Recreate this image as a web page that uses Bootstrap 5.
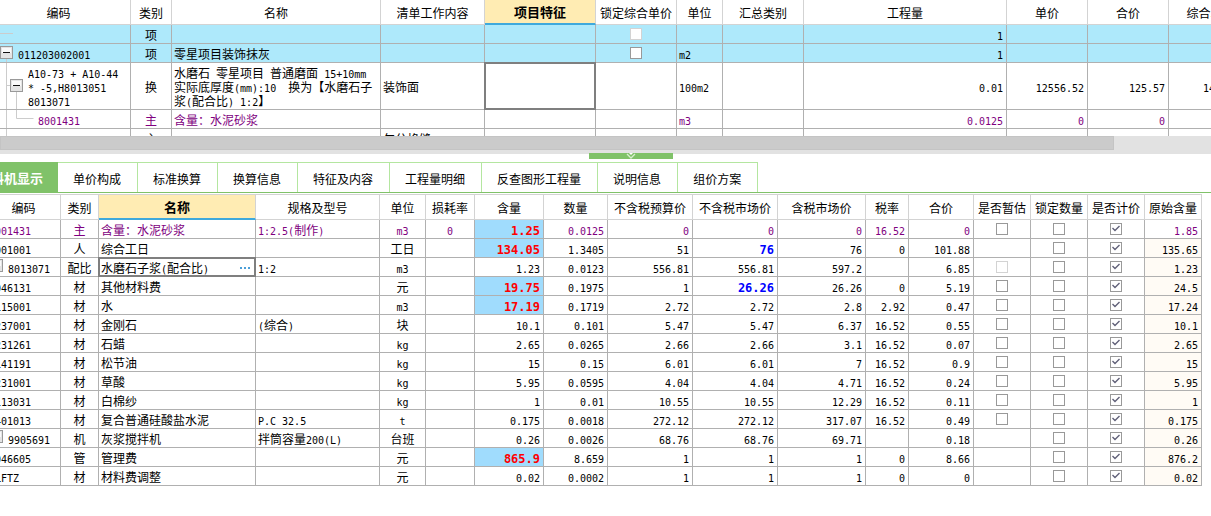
<!DOCTYPE html>
<html lang="zh-CN">
<head>
<meta charset="utf-8">
<meta name="viewport" content="width=device-width, initial-scale=1">
<title>工料机显示</title>
<link href="https://cdn.jsdelivr.net/npm/bootstrap@5.3.0/dist/css/bootstrap.min.css" rel="stylesheet">
<style>
  body { font: 12px/14px "Noto Sans CJK SC", sans-serif; color: #000; background: #fff; overflow: hidden; }
  .mono { font-family: "DejaVu Sans Mono", monospace; font-size: 10px; line-height: 10px; white-space: pre; }
  .grid-pane { overflow: hidden; }
  .grid-top { height: 136px; }
  /* both grids are scrolled slightly to the right */
  .sheet { table-layout: fixed; border-collapse: separate; border-spacing: 0; margin-left: -13px; }
  .sheet th { height: 25px; padding: 2px 0 0; font-weight: 400; text-align: center; vertical-align: middle; white-space: nowrap;
    border-right: 1px solid #d3d3d3; border-bottom: 1px solid #d3d3d3; overflow: hidden; }
  .sheet td { height: 19px; padding: 2px 2px 0; white-space: nowrap; vertical-align: middle;
    border-right: 1px solid #b0b0b0; border-bottom: 1px solid #b0b0b0; line-height: 14px; }
  .sheet th.current { background: #ffecb3; border-bottom: 2px solid #3fa9dc; font-weight: 700; font-size: 13px; padding: 0; }
  .sheet td.num { text-align: right; padding: 2px 3px 0; }
  .sheet td.mid { text-align: center; }
  .sheet td.tree, .sheet td.check { padding: 0; }
  .sheet td.tree .node-text { padding-top: 2px; }
  .sheet td.code { padding-left: 8px; }
  .sheet tr.tall td { height: 47px; }
  .sheet tr.section td { background: #aee9fb; }
  .sheet tr.main-item td { color: #800080; }
  .sheet td.cut { padding-left: 34px; }
  .sheet td.edited, .sheet tr.main-item td.edited { background: #a0dcfd; color: #f00; font-weight: 700; }
  .sheet td.price { color: #00f; font-weight: 700; }
  .sheet td.edited .mono, .sheet td.price .mono { font-size: 12px; }
  .sheet td.origin { background: #fffbf5; }
  .sheet td.picked { position: relative; }
  .sheet td.picked::after { content: ""; position: absolute; inset: -1px; border: 2px solid #7f7f7f; pointer-events: none; }
  .grid-bottom { padding-top: 1px; }
  .grid-bottom .sheet th { border-top: 1px solid #d3d3d3; height: 26px; }
  .more { border: 0; background: none; padding: 0 2px; line-height: 12px; }
  .form-check-input.tick { width: 12px; height: 12px; margin: 0; border: 1px solid #999; border-radius: 0; display: block; background-color: #fff; }
  .form-check-input.tick:checked { background-color: #fff; border-color: #999; background-size: 10px 10px;
    background-image: url("data:image/svg+xml,%3Csvg xmlns='http://www.w3.org/2000/svg' viewBox='0 0 10 10'%3E%3Cpath d='M1.5 4l2.5 2.5 4.5-4.5' fill='none' stroke='%23606078' stroke-width='1.4'/%3E%3C/svg%3E"); }
  .form-check-input.tick:disabled { opacity: 1; border-color: #d3d3d3; }
  .hscroll { height: 18px; background: #e2e2e2; }
  .hscroll-thumb { width: 92%; height: 14px; background: #cbcbcb; border: 1px solid #c4c4c4; }
  .splitter { height: 8px; }
  .splitter-grip { width: 84px; height: 6px; margin: -1px 0 0 48.6%; padding: 0; border: 0; background: #80c269; }
  .detail-tabs { border-bottom: 1px solid #80c269; margin-left: -37px; }
  .detail-tabs button { height: 30px; border: 0; border-top: 1px solid #b4e6a0; border-right: 1px solid #b4e6a0; background: #fff; padding: 2px 16px 0 15px; color: #000; white-space: nowrap; }
  .detail-tabs button.active { background: #80c269; border-color: #80c269; color: #fff; font-weight: 700; font-size: 13px; padding: 1px 14px 0 15px; }
</style>
</head>
<body>
<main>
  <section class="grid-pane grid-top" aria-label="清单">
    <table class="sheet" id="bill"></table>
  </section>
  <div class="hscroll"><div class="hscroll-thumb"></div></div>
  <div class="splitter d-flex">
    <button class="splitter-grip d-flex justify-content-center" aria-label="收起">
      <svg width="12" height="6" viewBox="0 0 12 6"><path d="M4 0h4L6 2z" fill="#fff"/><path d="M2 1l4 4 4-4" fill="none" stroke="#d9efd0" stroke-width="1.3"/></svg>
    </button>
  </div>
  <section class="overflow-hidden">
    <div class="detail-tabs d-flex" role="tablist">
      <button role="tab" class="active" aria-selected="true">工料机显示</button>
      <button role="tab">单价构成</button>
      <button role="tab">标准换算</button>
      <button role="tab">换算信息</button>
      <button role="tab">特征及内容</button>
      <button role="tab">工程量明细</button>
      <button role="tab">反查图形工程量</button>
      <button role="tab">说明信息</button>
      <button role="tab">组价方案</button>
    </div>
  </section>
  <section class="grid-pane grid-bottom" aria-label="工料机">
    <table class="sheet" id="detail"></table>
  </section>
</main>
<script src="https://cdn.jsdelivr.net/npm/bootstrap@5.3.0/dist/js/bootstrap.bundle.min.js"></script>
<script>
  // Latin runs use the half-width face
  const t = s => String(s).split('\n').map(line => line.replace(/[\x20-\x7e]+/g, m => `<span class="mono">${m}</span>`)).join('<br>');
  const td = (cls, html = '') => `<td class="${cls}">${html}</td>`;
  const tick = (label, state) => state === '' ? '' :
    `<div class="d-flex justify-content-center"><input type="checkbox" class="form-check-input tick" aria-label="${label}"${state === 1 ? ' checked' : ''}${state === 'x' ? ' disabled' : ''}></div>`;
  const head = (cols, current) =>
    `<colgroup>${cols.map(c => `<col style="width:${c[1]}px">`).join('')}</colgroup>` +
    `<thead><tr>${cols.map(c => `<th scope="col"${c[0] === current ? ' class="current"' : ''}>${c[0]}</th>`).join('')}</tr></thead>`;
  const build = (id, cols, current, rows) => {
    const table = document.getElementById(id);
    table.style.width = cols.reduce((sum, c) => sum + c[1], 0) + 'px';
    table.innerHTML = head(cols, current) + `<tbody>${rows}</tbody>`;
  };

  const box = (x, y) => `<rect x="${x + .5}" y="${y + .5}" width="12" height="12" fill="#e4e4e4" stroke="#999"/><path d="M${x + 2} ${y + 2}h9v5h-9z" fill="#fafafa"/><path d="M${x + 3} ${y + 6.5}h7" stroke="#111"/>`;
  const branch = (w, h, lines, extra = '') =>
    `<svg class="flex-shrink-0" width="${w}" height="${h}" aria-hidden="true"><path d="${lines}" fill="none" stroke="#ccc"/>${extra}</svg>`;
  const node = (svg, text) => td('tree', `<div class="d-flex align-items-center">${svg}<span class="node-text">${t(text)}</span></div>`);

  const billCols = [['编码', 144], ['类别', 41], ['名称', 209], ['清单工作内容', 104], ['项目特征', 111], ['锁定综合单价', 81],
    ['单位', 46], ['汇总类别', 81], ['工程量', 203], ['单价', 81], ['合价', 81], ['综合单价', 84]];
  const bill = [
    ['section', node(branch(31, 18, 'M13 8.5h13'), ''), '项', '', '', 'x', '', '1', '', '', ''],
    ['section', node(branch(31, 18, 'M19.5 14v4', box(13, 2)), '011203002001'), '项', '零星项目装饰抹灰', '', 0, 'm2', '1', '', '', ''],
    ['tall', node(branch(41, 46, 'M19.5 0v46M19.5 22.5h4M29.5 28v18', box(23, 16)), 'A10-73 + A10-44\n* -5,H8013051\n8013071'), '换',
      '水磨石 零星项目 普通磨面 15+10mm\n实际底厚度(mm):10  换为【水磨石子\n浆(配合比) 1:2】', '装饰面', '', '100m2', '0.01', '12556.52', '125.57', '14'],
    ['main-item', node(branch(51, 18, 'M19.5 0v18M29.5 0v8.5h17'), '8001431'), '主', '含量：水泥砂浆', '', '', 'm3', '0.0125', '0', '0', ''],
    ['', node(branch(51, 18, 'M19.5 0v18'), ''), '主', '', '勾分格缝', '', '', '0', '0', '0', ''],
  ];
  build('bill', billCols, '项目特征', bill.map(r => `<tr class="${r[0]}">` + r[1] + td('mid', t(r[2])) + td('', t(r[3])) + td('', t(r[4])) +
    td(r[0] === 'tall' ? 'picked' : '') + td('check', tick('锁定综合单价', r[5])) + td('', t(r[6])) + td('') +
    td('num', t(r[7])) + td('num', t(r[8])) + td('num', t(r[9])) + td('cut', t(r[10])) + '</tr>').join(''));

  const detailCols = [['编码', 74], ['类别', 38], ['名称', 157], ['规格及型号', 124], ['单位', 46], ['损耗率', 49], ['含量', 69], ['数量', 64],
    ['不含税预算价', 85], ['不含税市场价', 85], ['含税市场价', 88], ['税率', 43], ['合价', 65], ['是否暂估', 57], ['锁定数量', 57], ['是否计价', 57], ['原始含量', 57]];
  // code, kind, name, spec, unit, loss, content, quantity, budget, market, taxed, rate, total, provisional, original
  const detail = [
    ['001431', '主', '含量：水泥砂浆', '1:2.5(制作)', 'm3', '0', '1.25', '0.0125', '0', '0', '0', '16.52', '0', 0, '1.85'],
    ['001001', '人', '综合工日', '', '工日', '', '134.05', '1.3405', '51', '76', '76', '0', '101.88', '', '135.65'],
    ['8013071', '配比', '水磨石子浆(配合比)', '1:2', 'm3', '', '1.23', '0.0123', '556.81', '556.81', '597.2', '', '6.85', 'x', '1.23'],
    ['046131', '材', '其他材料费', '', '元', '', '19.75', '0.1975', '1', '26.26', '26.26', '0', '5.19', 0, '24.5'],
    ['115001', '材', '水', '', 'm3', '', '17.19', '0.1719', '2.72', '2.72', '2.8', '2.92', '0.47', 0, '17.24'],
    ['237001', '材', '金刚石', '(综合)', '块', '', '10.1', '0.101', '5.47', '5.47', '6.37', '16.52', '0.55', 0, '10.1'],
    ['231261', '材', '石蜡', '', 'kg', '', '2.65', '0.0265', '2.66', '2.66', '3.1', '16.52', '0.07', 0, '2.65'],
    ['141191', '材', '松节油', '', 'kg', '', '15', '0.15', '6.01', '6.01', '7', '16.52', '0.9', 0, '15'],
    ['231001', '材', '草酸', '', 'kg', '', '5.95', '0.0595', '4.04', '4.04', '4.71', '16.52', '0.24', 0, '5.95'],
    ['113031', '材', '白棉纱', '', 'kg', '', '1', '0.01', '10.55', '10.55', '12.29', '16.52', '0.11', 0, '1'],
    ['401013', '材', '复合普通硅酸盐水泥', 'P.C 32.5', 't', '', '0.175', '0.0018', '272.12', '272.12', '317.07', '16.52', '0.49', 0, '0.175'],
    ['9905691', '机', '灰浆搅拌机', '拌筒容量200(L)', '台班', '', '0.26', '0.0026', '68.76', '68.76', '69.71', '', '0.18', '', '0.26'],
    ['046605', '管', '管理费', '', '元', '', '865.9', '8.659', '1', '1', '1', '0', '8.66', '', '876.2'],
    ['LFTZ', '材', '材料费调整', '', '元', '', '0.02', '0.0002', '1', '1', '1', '0', '0', '', '0.02'],
  ];
  const edited = [0, 1, 3, 4, 12], priced = [1, 3];
  const dots = '<button class="more" aria-label="更多"><svg class="d-block" width="12" height="3" viewBox="0 0 12 3"><path d="M1 0h2v2h-2zM5 0h2v2h-2zM9 0h2v2h-2z" fill="#4b9fd8"/></svg></button>';
  build('detail', detailCols, '名称', detail.map((r, i) => `<tr class="${i === 0 ? 'main-item' : ''}">` +
    (r[0].length === 7 ? node(branch(21, 18, '', box(3, 1)), r[0]) : td('code', t(r[0]))) + td('mid', t(r[1])) +
    (i === 2 ? td('picked', `<div class="d-flex align-items-center justify-content-between"><span>${t(r[2])}</span>${dots}</div>`) : td('', t(r[2]))) +
    td('', t(r[3])) + td('mid', t(r[4])) + td('mid', t(r[5])) + td('num' + (edited.includes(i) ? ' edited' : ''), t(r[6])) + td('num', t(r[7])) +
    td('num', t(r[8])) + td('num' + (priced.includes(i) ? ' price' : ''), t(r[9])) + td('num', t(r[10])) + td('num', t(r[11])) + td('num', t(r[12])) +
    td('check', tick('是否暂估', r[13])) + td('check', tick('锁定数量', 0)) + td('check', tick('是否计价', 1)) + td('num' + (i ? ' origin' : ''), t(r[14])) + '</tr>').join(''));
</script>
</body>
</html>
